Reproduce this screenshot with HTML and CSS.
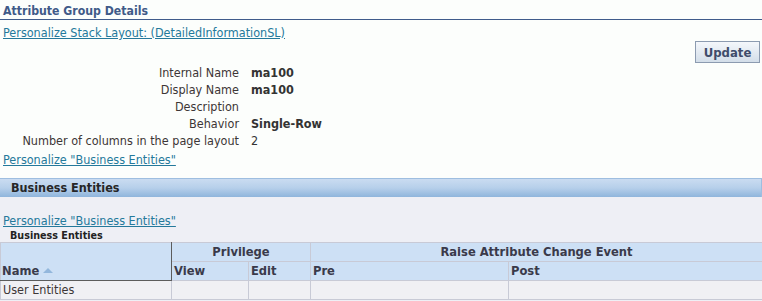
FILE: index.html
```html
<!DOCTYPE html>
<html lang="en">
<head>
    <meta charset="UTF-8">
    <title>Attribute Group Details</title>
    <link rel="stylesheet" href="styles.css">
</head>
<body>

    <!-- cabecalho da pagina -->
    <h1 class="title">Attribute Group Details</h1>
    <div class="stack-link"><a href="#">Personalize Stack Layout: (DetailedInformationSL)</a></div>

    <div class="actions">
        <button type="button" class="btn">Update</button>
    </div>

    <!-- detalhes do grupo -->
    <table class="details">
        <tr><td class="prompt">Internal Name</td><td class="value">ma100</td></tr>
        <tr><td class="prompt">Display Name</td><td class="value">ma100</td></tr>
        <tr><td class="prompt">Description</td><td class="value"></td></tr>
        <tr><td class="prompt">Behavior</td><td class="value">Single-Row</td></tr>
        <tr><td class="prompt">Number of columns in the page layout</td><td class="plain">2</td></tr>
    </table>
    <div class="pers-link"><a href="#">Personalize "Business Entities"</a></div>

    <!-- regiao business entities -->
    <div class="region-head">Business Entities</div>
    <div class="region">
        <div class="region-link"><a href="#">Personalize "Business Entities"</a></div>
        <div class="caption">Business Entities</div>
        <table class="grid">
            <colgroup>
                <col class="c-name">
                <col class="c-view">
                <col class="c-edit">
                <col class="c-pre">
                <col class="c-post">
            </colgroup>
            <tr>
                <th rowspan="2" class="name-head">Name <span class="sort"></span></th>
                <th colspan="2" class="group">Privilege</th>
                <th colspan="2" class="group">Raise Attribute Change Event</th>
            </tr>
            <tr>
                <th>View</th>
                <th>Edit</th>
                <th>Pre</th>
                <th>Post</th>
            </tr>
            <tr>
                <td>User Entities</td>
                <td></td>
                <td></td>
                <td></td>
                <td></td>
            </tr>
        </table>
    </div>

</body>
</html>
```

FILE: styles.css
```css
body {
    margin: 0;
    font-family: "DejaVu Sans Condensed", "DejaVu Sans", sans-serif;
    font-size: 12.5px;
    color: #333;
    background-color: #fcfefc;
}

a {
    color: #24799b;
    text-decoration: underline;
}

.title {
    margin: 0;
    padding: 3px 3px 0;
    font-size: 12.2px;
    line-height: 16px;
    font-weight: bold;
    color: #3f5a88;
    border-bottom: 1px solid #3f5b8b;
}

.stack-link {
    margin-top: 5px;
    padding-left: 3px;
    line-height: 16px;
}

.actions {
    text-align: right;
    padding-right: 2px;
    height: 23px;
}

.btn {
    height: 22px;
    width: 65px;
    padding: 0;
    font-family: inherit;
    font-size: 13px;
    font-weight: bold;
    color: #3f4c6b;
    background: linear-gradient(#f4f7fb, #d3dee9);
    border: 1px solid #8c9bb0;
    cursor: pointer;
}

.details {
    border-collapse: collapse;
}

.details td {
    height: 17px;
    padding: 0;
    line-height: 17px;
}

.prompt {
    width: 239px;
    text-align: right;
    color: #3d3636;
    padding-right: 12px !important;
}

.value {
    font-weight: bold;
}

.pers-link {
    margin-top: 3px;
    padding-left: 3px;
    line-height: 16px;
}

.region-head {
    margin-top: 10px;
    height: 18px;
    line-height: 18px;
    padding-left: 11px;
    font-size: 12.5px;
    font-weight: bold;
    color: #262626;
    border-top: 1px solid #9ebee0;
    border-right: 1px solid #9ebee0;
    background: linear-gradient(#cadcf1, #b6cfea 50%, #8fb5dc);
}

.region {
    background-color: #eeeff5;
    padding-top: 16px;
    height: 88px;
}

.region-link {
    padding-left: 3px;
    line-height: 16px;
}

.caption {
    padding-left: 10px;
    font-size: 10.7px;
    font-weight: bold;
    line-height: 13px;
    color: #222;
}

.grid {
    width: 762px;
    table-layout: fixed;
    border-collapse: collapse;
}

.c-name { width: 171px; }
.c-view { width: 77px; }
.c-edit { width: 62px; }
.c-pre { width: 198px; }
.c-post { width: 254px; }

.grid th,
.grid td {
    height: 18px;
    padding: 0 2px;
    border: 1px solid #c8cad6;
    text-align: left;
    line-height: 18px;
}

.grid th {
    background-color: #cde0f5;
    font-size: 12.8px;
    font-weight: bold;
    color: #3a3a4a;
}

.grid th.group {
    text-align: center;
}

.grid th.name-head {
    vertical-align: bottom;
    padding-left: 1px;
    border-right: 1px solid #5c5c5c;
    border-bottom: 1px solid #5c5c5c;
}

.grid td {
    background-color: #f0f0f4;
    color: #3d3636;
}

.sort {
    display: inline-block;
    width: 0;
    height: 0;
    border-left: 5px solid transparent;
    border-right: 5px solid transparent;
    border-bottom: 5px solid #93b7dc;
    vertical-align: 2px;
}
```
